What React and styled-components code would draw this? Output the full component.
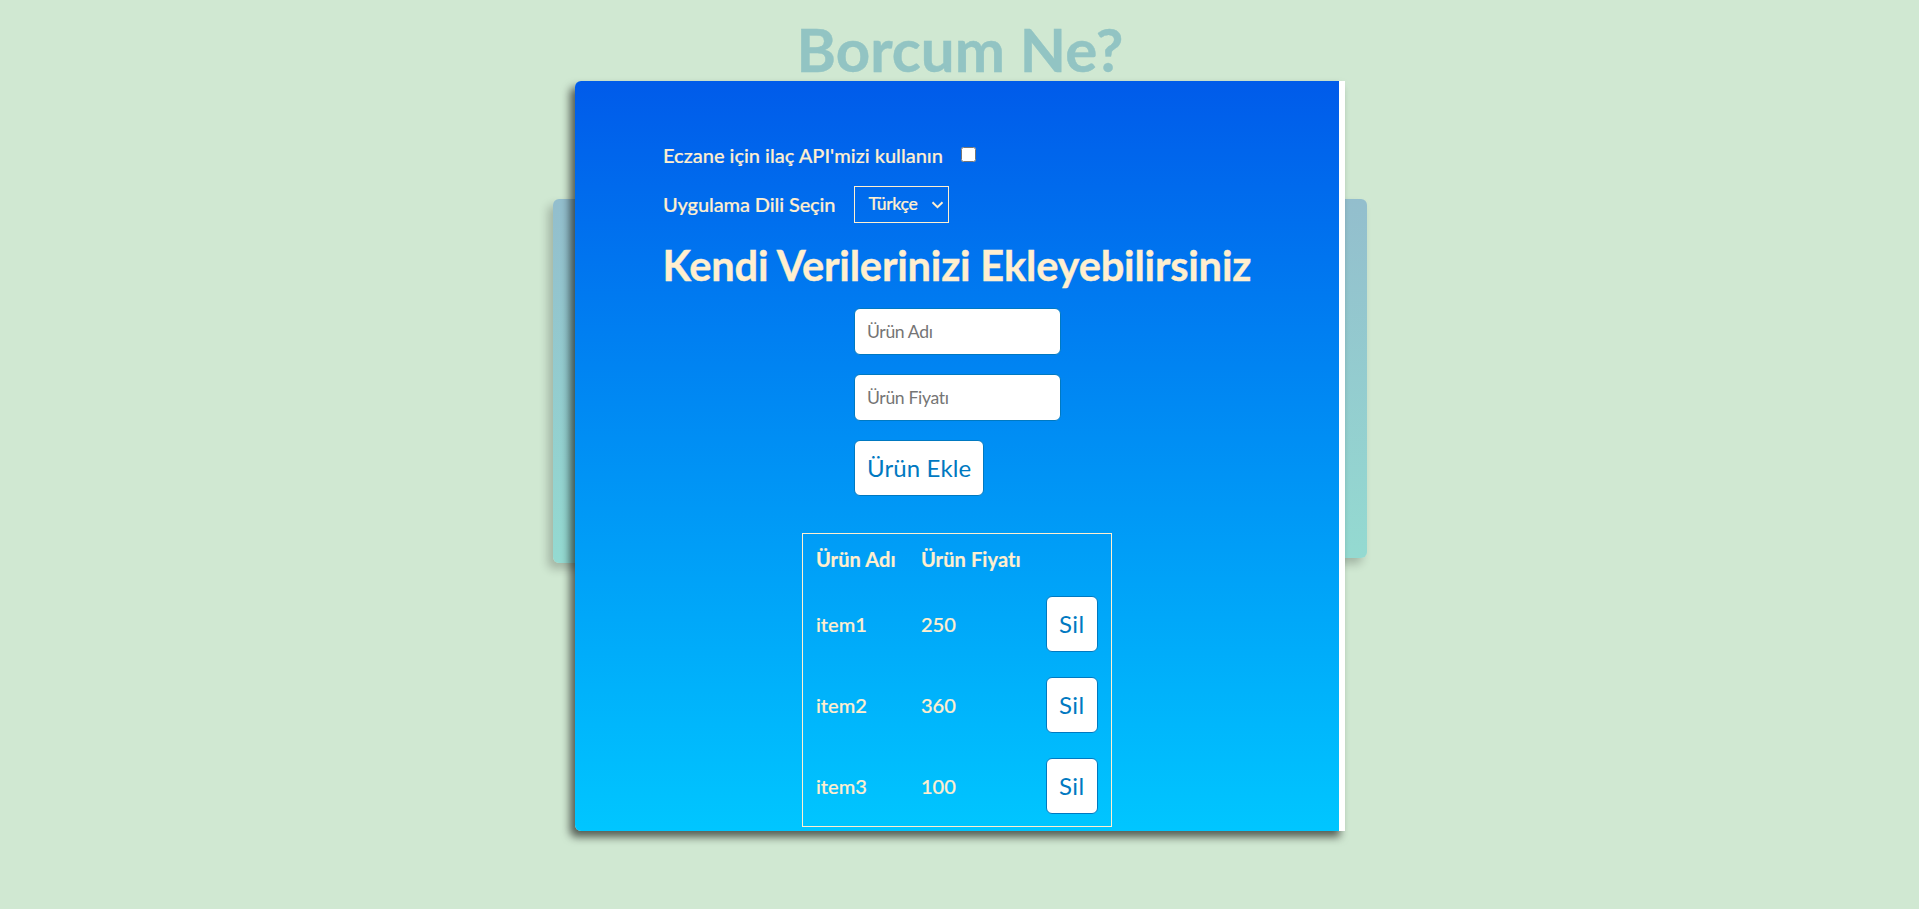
import React from 'react';
import styled, { createGlobalStyle } from 'styled-components';

const Global = createGlobalStyle`
  * { box-sizing: border-box; }
  body {
    margin: 0;
    background: #d0e8d2;
    font-family: Lato, sans-serif;
    font-variant-ligatures: none;
    color: #ffefcf;
    overflow: hidden;
  }
  button, input, select { font-family: inherit; font-variant-ligatures: none; }
`;

const Page = styled.main`
  position: relative;
  height: 909px;
  display: flex;
  flex-direction: column;
  align-items: center;
  overflow: hidden;
`;

const Title = styled.h1`
  margin: 13px 0 0 1px;
  font-size: 60px;
  line-height: 72px;
  font-weight: 700;
  letter-spacing: 0.1px;
  color: #92c4c3;
  -webkit-text-stroke: 0.4px #92c4c3;
`;

const Cards = styled.div`
  display: flex;
  align-items: flex-start;
  gap: 14px;
  margin-top: 114px;
`;

const Card = styled.section`
  width: 400px;
  height: ${(p) => p.$height}px;
  border-radius: 6px;
  background: linear-gradient(#93becd, #94dad1);
  box-shadow: -5px 6px 10px rgba(0, 0, 0, 0.22);
`;

const Modal = styled.section`
  position: absolute;
  top: 81px;
  left: 575px;
  width: 770px;
  height: 750px;
  display: flex;
  border-radius: 6px 0 0 6px;
  box-shadow: -5px 6px 8px rgba(0, 0, 0, 0.6);
`;

const Content = styled.div`
  flex: 1;
  padding: 59px 88px 0;
  border-radius: 6px 0 0 6px;
  background: linear-gradient(#005bea, #00c6ff);
  overflow: hidden;
`;

const Track = styled.div`
  width: 6px;
  background: #fff;
`;

const Option = styled.label`
  display: flex;
  align-items: center;
  height: ${(p) => p.$height}px;
  font-size: 20px;
  font-weight: 500;
  letter-spacing: ${(p) => p.$spacing || 0}px;
  -webkit-text-stroke: 0.2px #ffefcf;
`;

const Check = styled.input`
  width: 15px;
  height: 15px;
  margin: 0 0 2px 18px;
`;

const Select = styled.span`
  display: flex;
  align-items: center;
  justify-content: space-between;
  width: 95px;
  height: 37px;
  margin-left: 19px;
  padding: 0 4px 2px 13px;
  border: 1px solid #ffefcf;
  font-size: 17.6px;
  letter-spacing: -0.35px;
`;

const Chevron = styled.svg`
  margin-top: 3px;
`;

const Heading = styled.h2`
  margin: 2px 0 0 -0.5px;
  font-size: 41.6px;
  line-height: 50px;
  font-weight: 700;
  letter-spacing: -0.2px;
  white-space: nowrap;
  -webkit-text-stroke: 0.4px #ffefcf;
`;

const Form = styled.form`
  display: flex;
  flex-direction: column;
  align-items: flex-start;
  gap: 19px;
  margin: 18px 0 0 191px;
`;

const Field = styled.input`
  width: 207px;
  height: 47px;
  padding: 0 12px 1px;
  border: 1px solid #0079c1;
  border-radius: 6px;
  background: #fff;
  font-size: 17.6px;
  letter-spacing: -0.35px;
  &::placeholder { color: #757575; }
`;

const Button = styled.button`
  display: block;
  height: 56px;
  padding: 0 12px 2px;
  border: 1px solid #0079c1;
  border-radius: 6px;
  background: #fff;
  color: #0079c1;
  font-size: 24px;
  letter-spacing: ${(p) => p.$spacing}px;
`;

const Table = styled.div`
  width: 310px;
  margin: 37px 0 0 139px;
  border: 1px solid #ffefcf;
`;

const Row = styled.div`
  display: grid;
  grid-template-columns: 105px 125px 1fr;
  align-items: center;
  height: ${(p) => (p.$head ? 49 : 81)}px;
  padding: 1px 0 0 13px;
  font-size: 20px;
  font-weight: ${(p) => (p.$head ? 700 : 500)};
  letter-spacing: ${(p) => (p.$head ? 0.1 : 0)}px;
`;

const Cell = styled.span`
  -webkit-text-stroke: 0.2px #ffefcf;
`;

const items = [
  ['item1', '250'],
  ['item2', '360'],
  ['item3', '100'],
];

export default function App() {
  return (
    <Page>
      <Global />
      <Title>Borcum Ne?</Title>
      <Cards>
        <Card $height={364} />
        <Card $height={359} />
      </Cards>
      <Modal>
        <Content>
          <Option $height={30}>
            Eczane için ilaç API'mizi kullanın
            <Check type="checkbox" />
          </Option>
          <Option as="div" $height={68} $spacing={-0.1}>
            Uygulama Dili Seçin
            <Select>
              Türkçe
              <Chevron width="13" height="8" viewBox="0 0 13 8" fill="none" stroke="#ffefcf" strokeWidth="2">
                <path d="M1.5 1.2 6.5 6.2 11.5 1.2" />
              </Chevron>
            </Select>
          </Option>
          <Heading>Kendi Verilerinizi Ekleyebilirsiniz</Heading>
          <Form onSubmit={(e) => e.preventDefault()}>
            <Field placeholder="Ürün Adı" />
            <Field placeholder="Ürün Fiyatı" />
            <Button $spacing={0.13}>Ürün Ekle</Button>
          </Form>
          <Table>
            <Row $head>
              <Cell>Ürün Adı</Cell>
              <Cell>Ürün Fiyatı</Cell>
            </Row>
            {items.map(([name, price]) => (
              <Row key={name}>
                <Cell>{name}</Cell>
                <Cell>{price}</Cell>
                <span><Button $spacing={0.4}>Sil</Button></span>
              </Row>
            ))}
          </Table>
        </Content>
        <Track />
      </Modal>
    </Page>
  );
}
